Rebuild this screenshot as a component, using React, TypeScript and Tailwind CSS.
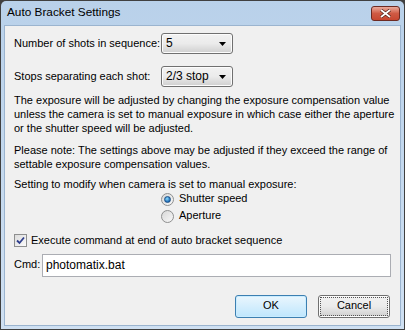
import { useState } from 'react'

function Select({ value }: { value: string }) {
  return (
    <div className="w-[72px] h-[21px] rounded-[3px] border border-[#707070] bg-gradient-to-b from-[#f2f2f2] via-[#ebebeb] to-[#cfcfcf] flex items-center pl-[4px] pr-[6px] shadow-[inset_0_0_0_1px_#fcfcfc]">
      <span className="flex-1 text-[12px]">{value}</span>
      <svg width="7" height="4" viewBox="0 0 7 4">
        <path d="M0 0h7L3.5 4z" fill="#000" />
      </svg>
    </div>
  )
}

function Radio({ checked, label }: { checked: boolean; label: string }) {
  return (
    <div className="flex items-center gap-[5px] h-[17px]">
      <div className="w-[13px] h-[13px] rounded-full border border-[#8e8f8f] bg-gradient-to-br from-[#d8d8d8] to-[#f8f8f8] flex items-center justify-center">
        {checked && (
          <div className="w-[7px] h-[7px] rounded-full bg-[radial-gradient(circle_at_40%_35%,#8adcff,#1f6bb5_70%)] border border-[#1b4f86]" />
        )}
      </div>
      <span>{label}</span>
    </div>
  )
}

function Button({ label, focused }: { label: string; focused?: boolean }) {
  return (
    <div
      className={
        'w-[72px] h-[23px] rounded-[3px] border flex items-center justify-center ' +
        (focused
          ? 'border-[#3c7fb1] bg-gradient-to-b from-[#eaf6fd] to-[#bee6fd] shadow-[inset_0_0_0_1px_#c9ecff]'
          : 'border-[#707070] bg-gradient-to-b from-[#f2f2f2] via-[#ebebeb] to-[#cfcfcf] shadow-[inset_0_0_0_1px_#fcfcfc]')
      }
    >
      <div
        className={
          focused
            ? ''
            : 'outline outline-1 outline-dotted outline-[#555] w-[66px] h-[17px] flex items-center justify-center'
        }
      >
        {label}
      </div>
    </div>
  )
}

export default function App() {
  const [cmd, setCmd] = useState('photomatix.bat')

  return (
    <div
      className="w-[405px] h-[330px] bg-[#404040] p-px text-[11px] text-black whitespace-nowrap"
      style={{ fontFamily: '"Liberation Sans", Arial, sans-serif' }}
    >
      <div className="h-full bg-gradient-to-b from-[#b9d1ea] to-[#cfe0f2] rounded-t-[5px] flex flex-col px-[3px] pb-[3px]">
        <div className="h-[24px] shrink-0 flex items-center justify-between pl-[3px] pr-[1px]">
          <span className="text-[11.8px] leading-none">Auto Bracket Settings</span>
          <div className="w-[29px] h-[15px] rounded-[3px] border border-[#6d2a22] bg-gradient-to-b from-[#e9a99b] via-[#cf5a44] to-[#c74731] flex items-center justify-center">
            <svg width="11" height="9" viewBox="0 0 11 9">
              <path d="M1 1l9 7M10 1L1 8" stroke="#4a1d17" strokeWidth="3.2" />
              <path d="M1 1l9 7M10 1L1 8" stroke="#fff" strokeWidth="1.8" />
            </svg>
          </div>
        </div>
        <div className="flex-1 min-h-0 bg-[#f0f0f0] border border-[#9bb4cf] px-[9px] pt-[7px] leading-[13.8px]">
          <div className="flex items-center h-[21px]">
            <span className="w-[147px]">Number of shots in sequence:</span>
            <Select value="5" />
          </div>
          <div className="flex items-center h-[21px] mt-[12px]">
            <span className="w-[147px]">Stops separating each shot:</span>
            <Select value="2/3 stop" />
          </div>
          <p className="mt-[7px]">
            The exposure will be adjusted by changing the exposure compensation value
            <br />
            unless the camera is set to manual exposure in which case either the aperture
            <br />
            or the shutter speed will be adjusted.
          </p>
          <p className="mt-[9px]">
            Please note: The settings above may be adjusted if they exceed the range of
            <br />
            settable exposure compensation values.
          </p>
          <p className="mt-[6px]">Setting to modify when camera is set to manual exposure:</p>
          <div className="pl-[147px] -mt-[1px]">
            <Radio checked label="Shutter speed" />
            <Radio checked={false} label="Aperture" />
          </div>
          <div className="flex items-center gap-[4px] mt-[9px] h-[14px]">
            <div className="w-[13px] h-[13px] border border-[#8e8f8f] bg-gradient-to-br from-[#dcdcdc] to-[#fbfbfb] flex items-center justify-center">
              <svg width="9" height="9" viewBox="0 0 9 9">
                <path d="M1 4.5l2.5 2.5L8 1.5" stroke="#2e3e8c" strokeWidth="1.8" fill="none" />
              </svg>
            </div>
            <span>Execute command at end of auto bracket sequence</span>
          </div>
          <div className="flex items-center mt-[6px]">
            <span className="w-[28px]">Cmd:</span>
            <input
              value={cmd}
              onChange={(e) => setCmd(e.target.value)}
              className="flex-1 h-[23px] border border-[#abadb3] bg-white px-[3px] outline-none text-[12px]"
            />
          </div>
          <div className="flex justify-end gap-[11px] mt-[18px] pr-[1px]">
            <Button label="OK" focused />
            <Button label="Cancel" />
          </div>
        </div>
      </div>
    </div>
  )
}
